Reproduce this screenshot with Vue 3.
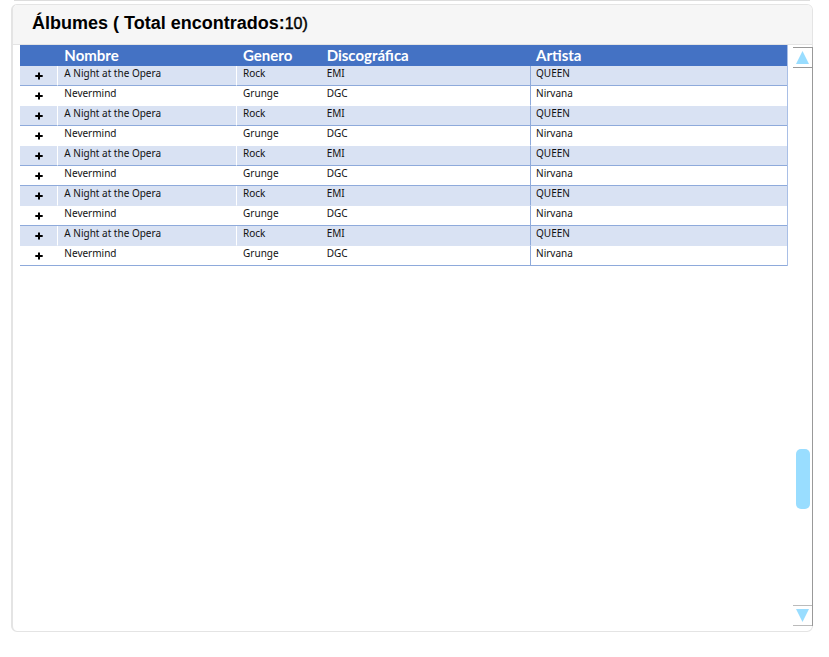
<script setup>
import { ref } from 'vue'

const albums = ref(
  Array.from({ length: 10 }, (_, i) =>
    i % 2 === 0
      ? { name: 'A Night at the Opera', genre: 'Rock', label: 'EMI', artist: 'QUEEN' }
      : { name: 'Nevermind', genre: 'Grunge', label: 'DGC', artist: 'Nirvana' }
  )
)
const ruledRows = [0, 2, 4, 5, 7, 9]
const thumbTop = ref(71)
</script>

<template>
  <div class="page">
    <main class="panel">
      <header class="panel-head">
        <h1>Álbumes ( Total encontrados:<span class="count">{{ albums.length }})</span></h1>
      </header>
      <div class="panel-body">
        <div class="table-area">
          <table>
            <colgroup>
              <col class="c-add" />
              <col class="c-name" />
              <col class="c-genre" />
              <col class="c-label" />
              <col class="c-artist" />
            </colgroup>
            <thead>
              <tr>
                <th></th>
                <th scope="col">Nombre</th>
                <th scope="col">Genero</th>
                <th scope="col">Discográfica</th>
                <th scope="col">Artista</th>
              </tr>
            </thead>
            <tbody>
              <tr v-for="(album, i) in albums" :key="i" :class="{ ruled: ruledRows.includes(i) }">
                <td class="add">
                  <button type="button">
                    <svg viewBox="0 0 8 8" width="8" height="8"><path d="M3 0.5h2v2.500h2.700v2h-2.700v2.500h-2v-2.500h-2.700v-2h2.700z" /></svg>
                  </button>
                </td>
                <td class="name">{{ album.name }}</td>
                <td>{{ album.genre }}</td>
                <td>{{ album.label }}</td>
                <td class="artist">{{ album.artist }}</td>
              </tr>
            </tbody>
          </table>
        </div>
        <div class="scroller">
          <button type="button" class="step up">
            <svg viewBox="0 0 13 13" width="13" height="13"><path d="M6.500 0L13 13H0z" /></svg>
          </button>
          <div class="track">
            <div class="thumb" :style="{ top: thumbTop + '%' }"></div>
          </div>
          <button type="button" class="step down">
            <svg viewBox="0 0 13 13" width="13" height="13"><path d="M0 0H13L6.500 13z" /></svg>
          </button>
        </div>
      </div>
    </main>
  </div>
</template>

<style>
body {
  margin: 0;
  background: #fff;
}
</style>

<style scoped>
.page {
  box-sizing: border-box;
  min-height: 100vh;
  padding: 0 16px 25px 11px;
  display: flex;
  flex-direction: column;
  font-family: "Noto Sans", "Open Sans", sans-serif;
  color: #111;
}
.page::before {
  content: "";
  height: 1px;
  margin: 0 3px 3px;
  background: #ddd;
}
.panel {
  flex: 1;
  display: flex;
  flex-direction: column;
  border: 1px solid #e4e4e4;
  border-left-width: 2px;
  border-radius: 6px;
}
.panel-head {
  box-sizing: border-box;
  height: 40px;
  padding: 0 19px 2px;
  display: flex;
  align-items: center;
  background: #f6f6f6;
  border-bottom: 1px solid #e4e4e4;
  border-radius: 5px 5px 0 0;
}
h1 {
  margin: 0;
  font: bold 18px/22px "Liberation Sans", Arial, sans-serif;
  color: #000;
}
.count {
  font-size: 16px;
  font-weight: normal;
  -webkit-text-stroke: 0.4px #000;
}
.panel-body {
  flex: 1;
  display: flex;
  gap: 5px;
}
.table-area {
  flex: 1;
  padding-left: 7px;
}
table {
  width: 100%;
  table-layout: fixed;
  border-collapse: separate;
  border-spacing: 0;
  border-right: 1px solid #a9bfe6;
}
.c-add { width: 5%; }
.c-name { width: 23.300%; }
.c-genre { width: 10.900%; }
.c-label { width: 27.300%; }
th {
  height: 21px;
  padding: 0 0 0 6px;
  background: #4472c4;
  color: #fff;
  font-family: Lato, sans-serif;
  font-size: 15px;
  line-height: 21px;
  font-weight: bold;
  text-align: left;
}
td {
  box-sizing: border-box;
  height: 20px;
  padding: 0 0 4px 6px;
  font-size: 10px;
  line-height: 15px;
  border-bottom: 1px solid transparent;
}
tbody tr:nth-child(odd) td {
  background: #d9e2f3;
}
tbody tr.ruled td {
  border-bottom-color: #8eaadb;
}
tbody td.artist {
  padding-left: 5px;
  border-left: 1px solid #8eaadb;
}
tbody tr:nth-child(odd) .add,
tbody tr:nth-child(odd) .name {
  border-right: 1px solid #fff;
}
td.add {
  padding: 0;
  text-align: center;
}
.add button {
  display: block;
  margin: 0 auto;
  padding: 0;
  border: 0;
  background: none;
}
.add svg {
  display: block;
}
.scroller {
  width: 19px;
  margin: 2px -1px 5px 0;
  display: flex;
  flex-direction: column;
  border-right: 1px solid #999;
}
.step {
  height: 21px;
  padding: 0;
  display: flex;
  align-items: center;
  justify-content: center;
  border: 1px solid #999;
  border-width: 1px 0;
  background: #fff;
}
.down {
  border-color: #bbb;
}
.step path {
  fill: #99ddff;
}
.track {
  flex: 1;
  position: relative;
}
.thumb {
  position: absolute;
  left: 3px;
  width: 14px;
  height: 60px;
  border-radius: 5px;
  background: #99ddff;
}
</style>
